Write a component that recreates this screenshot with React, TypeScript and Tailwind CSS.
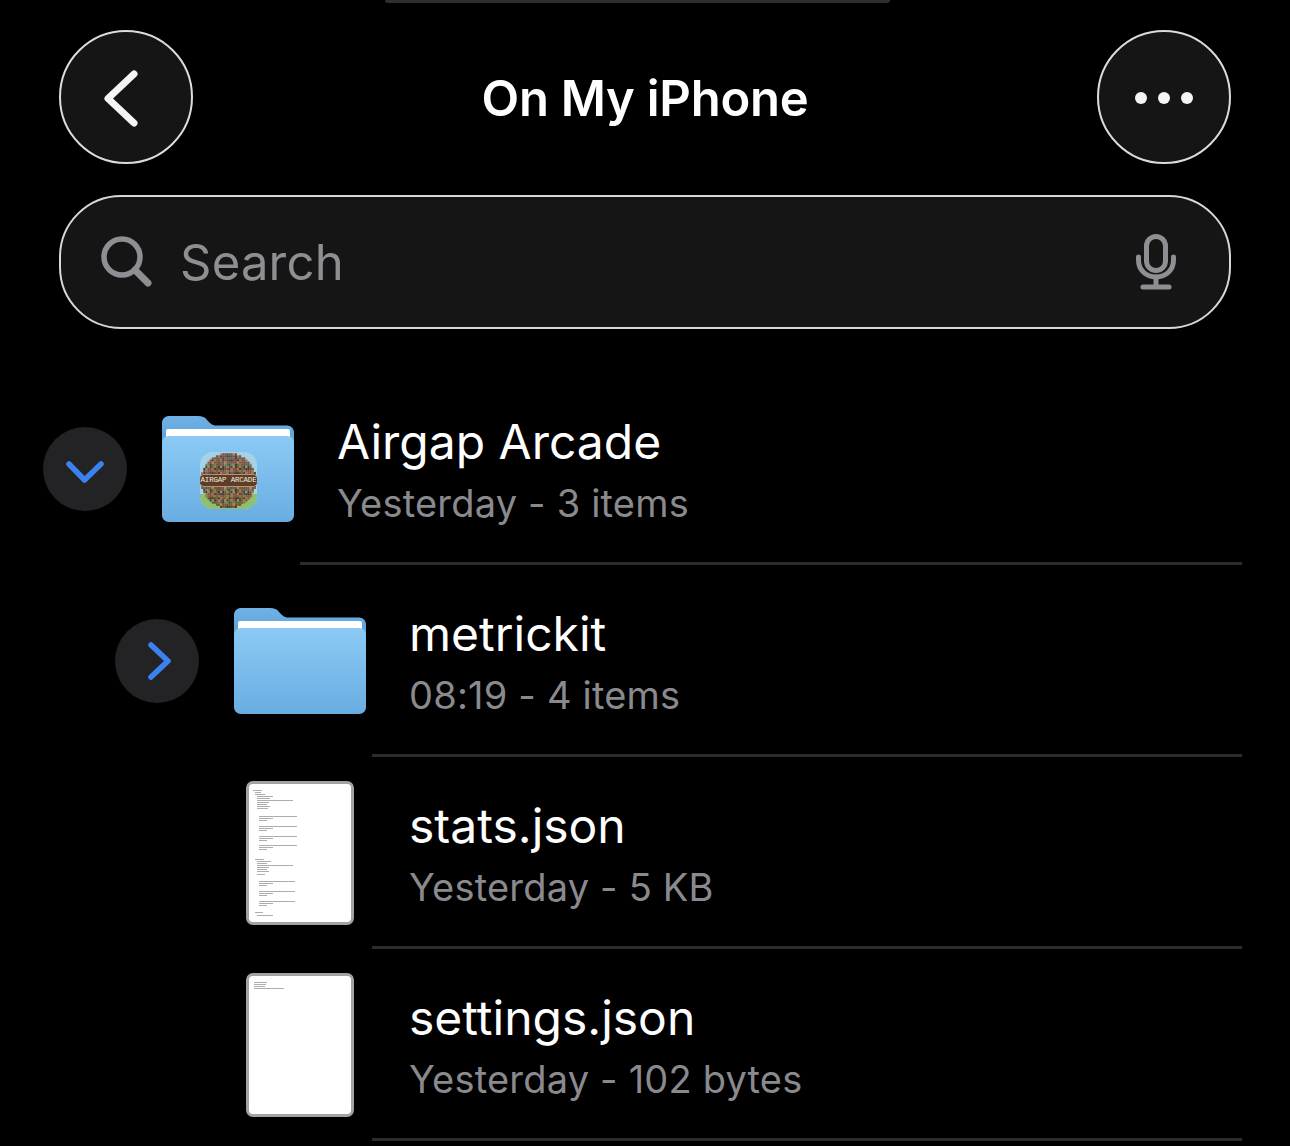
import type { ReactNode } from "react"

const sans = "font-['Inter','Liberation_Sans',sans-serif]"

function Folder() {
  return (
    <svg width="132" height="106" viewBox="0 0 132 106" className="block">
      <defs>
        <linearGradient id="folderFront" x1="0" y1="0" x2="0" y2="1">
          <stop offset="0" stopColor="#8ccaf5" />
          <stop offset="1" stopColor="#68ade2" />
        </linearGradient>
        <linearGradient id="folderBack" x1="0" y1="0" x2="0" y2="1">
          <stop offset="0" stopColor="#6fb2e6" />
          <stop offset="1" stopColor="#5c9fd6" />
        </linearGradient>
      </defs>
      <path
        d="M0 30V7C0 3 3 0 7 0H36C40 0 43 1 45 4L48 7C50 9 52 9.500 55 9.500H125C129 9.500 132 12.500 132 16.500V30Z"
        fill="url(#folderBack)"
      />
      <rect x="4" y="13" width="124" height="12" rx="2" fill="#ffffff" />
      <path
        d="M0 27C0 23 3 20 7 20H125C129 20 132 23 132 27V99C132 103 129 106 125 106H7C3 106 0 103 0 99Z"
        fill="url(#folderFront)"
      />
    </svg>
  )
}

const tileColors = ["#6b4a3a", "#8a5a44", "#463a3a", "#5a3030", "#6f8a4a", "#7a5a40", "#a8754a", "#3a3234", "#8c4a3a", "#b09060", "#4f6a3c", "#75503c"]

function ArcadeArt() {
  const tiles: ReactNode[] = []
  for (let y = 0; y < 26; y++) {
    for (let x = 0; x < 26; x++) {
      const dx = x - 12.5
      const dy = y - 12.5
      if (dx * dx + dy * dy > 170) continue
      const c = tileColors[(x * x * 5 + y * 11 + x * y * 7 + y * y * 3) % tileColors.length]
      tiles.push(<rect key={`${x}-${y}`} x={x * 2.1 + 1.200} y={y * 2.1 + 1.200} width="2.2" height="2.2" fill={c} />)
    }
  }
  return (
    <div className="relative w-[57px] h-[57px] rounded-[13px] overflow-hidden bg-[#a6d2e8]">
      <svg width="57" height="57" viewBox="0 0 57 57" className="block blur-[0.5px]">
        <rect y="42" width="57" height="15" fill="#8fc06e" />
        {tiles}
      </svg>
      <div className="absolute left-[-1px] right-[-1px] top-[22px] h-[13px] rounded-[5px] bg-[#5b3d2a] border border-[#b8946c] flex items-center justify-center">
        <span className="font-['Liberation_Mono',monospace] text-[7.500px] leading-none text-[#f4ead8] whitespace-nowrap tracking-[-0.2px]">AIRGAP ARCADE</span>
      </div>
    </div>
  )
}

const statsLines = [
  [9, 7, 9], [11, 9, 6], [13, 9, 10], [15, 11, 16], [17, 11, 13], [19, 11, 36], [21, 11, 12], [23, 11, 10], [25, 11, 13], [27, 11, 11],
  [35, 13, 38], [37, 13, 14], [39, 13, 8], [45, 13, 38], [47, 13, 14], [49, 13, 8], [55, 13, 38], [57, 13, 14], [59, 13, 8], [64, 13, 38], [66, 13, 14], [68, 13, 8],
  [78, 9, 9], [80, 11, 14], [82, 11, 10], [84, 11, 36], [86, 11, 12], [88, 11, 10], [90, 11, 12], [93, 11, 8],
  [100, 13, 36], [102, 13, 14], [104, 13, 8], [110, 13, 36], [112, 13, 14], [114, 13, 8], [120, 13, 36], [122, 13, 14], [124, 13, 8],
  [131, 9, 8], [134, 11, 16],
]

const settingsLines = [
  [9, 8, 13], [11, 8, 12], [13, 8, 11], [15, 8, 30],
]

function Doc({ lines }: { lines: number[][] }) {
  return (
    <div className="w-[108px] h-[144px] rounded-[7px] border-[3px] border-[#a3a3a3] bg-white overflow-hidden">
      <svg width="102" height="138" viewBox="3 3 102 138" className="block blur-[0.3px]">
        {lines.map(([y, x, w], i) => (
          <rect key={i} x={x} y={y} width={w} height="1" fill="#adadad" />
        ))}
      </svg>
    </div>
  )
}

function Toggle({ open }: { open: boolean }) {
  return (
    <div className="w-[84px] h-[84px] rounded-full bg-[#232326] flex items-center justify-center">
      <svg width="40" height="40" viewBox="0 0 40 40" fill="none" stroke="#3b82f0" strokeWidth="5.500" strokeLinecap="round" strokeLinejoin="round">
        {open ? <path d="M4 15L19.500 31L36 15" /> : <path d="M14 4L31 20L14 36" />}
      </svg>
    </div>
  )
}

type RowProps = {
  toggle?: "open" | "closed"
  icon: ReactNode
  name: string
  meta: string
  bodyClass: string
}

function Row({ toggle, icon, name, meta, bodyClass }: RowProps) {
  return (
    <div className={`flex h-[192px] ${bodyClass}`}>
      {toggle && (
        <div className="mr-[35px] flex items-center">
          <Toggle open={toggle === "open"} />
        </div>
      )}
      <div className="w-[132px] flex items-center justify-center">{icon}</div>
      <div className="ml-[6px] mr-[48px] flex-1 border-b-[3px] border-[#2c2c2e] pl-[37px] flex flex-col justify-center pt-[5px]">
        <div className="text-[48px] leading-[60px] text-white tracking-[0px]">{name}</div>
        <div className="text-[38px] leading-[50px] mt-[6px] text-[#8a8a8e] tracking-[0.2px]">{meta}</div>
      </div>
    </div>
  )
}

export default function App() {
  return (
    <div className={`w-[1290px] h-[1146px] bg-black overflow-hidden ${sans}`}>
      <div className="ml-[385px] w-[505px] h-[3px] rounded-b-[10px] bg-[#2e2e2e]" />

      <div className="mt-[27px] px-[59px] flex items-center justify-between">
        <button className="w-[134px] h-[134px] rounded-full bg-[#151516] border-2 border-[#dcdcdc] flex items-center justify-center">
          <svg width="60" height="70" viewBox="0 0 60 70" fill="none" stroke="#f5f5f5" strokeWidth="7" strokeLinecap="round" strokeLinejoin="round" className="ml-[-6px] mt-[2px]">
            <path d="M41 11L15 35.500L41 60" />
          </svg>
        </button>
        <h1 className="text-[49px] leading-none font-semibold text-white tracking-[-0.25px] pt-[2px]">On My iPhone</h1>
        <button className="w-[134px] h-[134px] rounded-full bg-[#151516] border-2 border-[#dcdcdc] flex items-center justify-center gap-[11px] pt-[2px]">
          <span className="w-[12px] h-[12px] rounded-full bg-[#f5f5f5]" />
          <span className="w-[12px] h-[12px] rounded-full bg-[#f5f5f5]" />
          <span className="w-[12px] h-[12px] rounded-full bg-[#f5f5f5]" />
        </button>
      </div>

      <div className="mx-[59px] mt-[31px] h-[134px] rounded-[62px] bg-[#151516] border-2 border-[#d8d8d8] flex items-center pl-[40px] pr-[53px]">
        <svg width="52" height="52" viewBox="0 0 52 52" fill="none" stroke="#8e8e93" strokeWidth="5.500" strokeLinecap="round">
          <circle cx="21" cy="21" r="18" />
          <path d="M34 34L47 47" strokeWidth="7" />
        </svg>
        <span className="ml-[27px] text-[49px] leading-none text-[#8e8e93] tracking-[0.2px]">Search</span>
        <svg width="40" height="56" viewBox="0 0 40 56" fill="none" stroke="#8e8e93" strokeWidth="5" strokeLinecap="round" className="ml-auto">
          <rect x="10.500" y="2.500" width="19" height="34" rx="9.500" />
          <path d="M2.500 23V26C2.500 36 10 43 20 43C30 43 37.500 36 37.500 26V23" />
          <path d="M20 43V52M7 53H33" />
        </svg>
      </div>

      <div className="mt-[44px]">
        <Row
          toggle="open"
          bodyClass="pl-[43px]"
          icon={
            <div className="relative">
              <Folder />
              <div className="absolute left-[38px] top-[36px]">
                <ArcadeArt />
              </div>
            </div>
          }
          name="Airgap Arcade"
          meta="Yesterday - 3 items"
        />
        <Row toggle="closed" bodyClass="pl-[115px]" icon={<Folder />} name="metrickit" meta="08:19 - 4 items" />
        <Row bodyClass="pl-[234px]" icon={<Doc lines={statsLines} />} name="stats.json" meta="Yesterday - 5 KB" />
        <Row bodyClass="pl-[234px]" icon={<Doc lines={settingsLines} />} name="settings.json" meta="Yesterday - 102 bytes" />
      </div>
    </div>
  )
}
